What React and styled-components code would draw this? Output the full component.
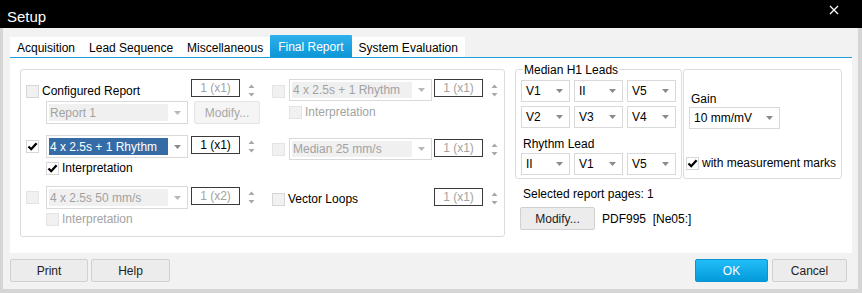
import React from 'react';
import styled, { createGlobalStyle, css } from 'styled-components';

const GlobalStyle = createGlobalStyle`
  html, body {
    margin: 0;
    padding: 0;
  }
  body {
    font-family: "Liberation Sans", Arial, sans-serif;
    font-size: 12px;
    color: #000;
    background: #fff;
  }
`;

const Window = styled.div`
  width: 862px;
  height: 293px;
  display: flex;
  flex-direction: column;
  background: #d5d5d5;
`;

const TitleBar = styled.div`
  height: 28px;
  flex: none;
  background: #000;
  color: #fff;
  display: flex;
  justify-content: space-between;
  align-items: flex-start;
  padding-left: 7px;
`;

const Title = styled.span`
  font-size: 15px;
  line-height: 15px;
  margin-top: 9px;
`;

const CloseIcon = styled.svg`
  margin: 5px 23px 0 0;
`;

const Body = styled.div`
  flex: 1;
  margin: 0 4px 4px 3px;
  padding: 7px 6px 7px 7px;
  background: #f2f2f2;
  display: flex;
  flex-direction: column;
`;

const TabStrip = styled.div`
  display: flex;
  align-items: flex-end;
  height: 22px;
`;

const Tab = styled.div`
  height: 20px;
  box-sizing: border-box;
  padding: 3px 7px 0;
  line-height: 17px;
  background: #fff;
  white-space: nowrap;
  ${(p) =>
    p.$active &&
    css`
      height: 22px;
      line-height: 19px;
      padding: 3px 8px 0;
      color: #fff;
      background: linear-gradient(#2fb1ec, #0d96d6);
      border-radius: 1px 1px 0 0;
    `}
`;

const Panel = styled.div`
  height: 196px;
  box-sizing: border-box;
  border-top: 1px solid #1d9ee0;
  background: #fff;
  padding: 11px 0 0 10px;
  display: flex;
  align-items: flex-start;
`;

const GroupBox = styled.div`
  box-sizing: border-box;
  width: ${(p) => p.$w}px;
  height: ${(p) => p.$h}px;
  border: 1px solid #dcdcdc;
  border-radius: 3px;
  display: flex;
  flex-direction: ${(p) => (p.$row ? 'row' : 'column')};
`;

const ReportGroup = styled(GroupBox)`
  padding: 9px 0 0 5px;
`;

const Column = styled.div`
  width: ${(p) => p.$w}px;
  display: flex;
  flex-direction: column;
`;

const Entry = styled.div`
  display: flex;
  flex-direction: column;
  margin-top: ${(p) => p.$top || 0}px;
`;

const MainRow = styled.div`
  display: grid;
  grid-template-columns: ${(p) => p.$check}px 145px 49px auto;
  align-items: center;
  height: 22px;
`;

const SubRow = styled.div`
  display: flex;
  align-items: center;
  padding-left: ${(p) => p.$indent}px;
  padding-top: ${(p) => p.$top || 0}px;
`;

const CheckLabel = styled.label`
  display: flex;
  align-items: center;
  gap: 3px;
  white-space: nowrap;
  color: ${(p) => (p.$disabled ? '#a3a3a3' : '#000')};
  grid-column: ${(p) => (p.$span ? '1 / 3' : 'auto')};
  margin-top: ${(p) => p.$top || 0}px;
`;

const Box = styled.span`
  width: 13px;
  height: 13px;
  box-sizing: border-box;
  flex: none;
  border: 1px solid ${(p) => (p.$disabled ? '#e4e4e4' : '#d6d6d6')};
  background: ${(p) => (p.$checked ? '#fff' : '#f1f1f1')};
  display: inline-flex;
  align-items: center;
  justify-content: center;
`;

const Check = ({ checked, disabled, label, span, top }) => (
  <CheckLabel $disabled={disabled} $span={span} $top={top}>
    <Box $checked={checked} $disabled={disabled}>
      {checked && (
        <svg width="11" height="11" viewBox="0 0 11 11">
          <path d="M1.5 5.5 L4.2 8.2 L9.6 2.2" fill="none" stroke="#000" strokeWidth="2.3" />
        </svg>
      )}
    </Box>
    {label}
  </CheckLabel>
);

const ComboFrame = styled.div`
  display: flex;
  box-sizing: border-box;
  width: ${(p) => p.$w}px;
  height: ${(p) => p.$h || 22}px;
  border: 1px solid #d9d9d9;
  background: #fff;
`;

const tones = {
  plain: { bg: 'transparent', fg: '#000' },
  disabled: { bg: '#f0f0f0', fg: '#a2a2a2' },
  selected: { bg: '#356ca5', fg: '#fff' },
};

const ComboValue = styled.div`
  flex: 1;
  margin: 2px 0 2px 2px;
  padding-left: ${(p) => (p.$tone === 'plain' ? 2 : 1)}px;
  display: flex;
  align-items: center;
  white-space: nowrap;
  overflow: hidden;
  background: ${(p) => tones[p.$tone].bg};
  color: ${(p) => tones[p.$tone].fg};
`;

const ComboArrow = styled.div`
  width: 19px;
  flex: none;
  display: flex;
  align-items: center;
  justify-content: center;
`;

const Combo = ({ w, h, value, tone = 'plain', disabled }) => (
  <ComboFrame $w={w} $h={h}>
    <ComboValue $tone={tone}>{value}</ComboValue>
    <ComboArrow>
      <svg width="7" height="4" viewBox="0 0 7 4">
        <path d="M0 0 H7 L3.5 4 Z" fill={disabled ? '#b8b8b8' : '#8a8a8a'} />
      </svg>
    </ComboArrow>
  </ComboFrame>
);

const SpinBox = styled.div`
  width: 49px;
  height: 18px;
  box-sizing: border-box;
  border: 1px solid #3a3a3a;
  display: flex;
  align-items: center;
  justify-content: center;
  align-self: start;
  margin-top: ${(p) => p.$top || 0}px;
  color: ${(p) => (p.$disabled ? '#a3a3a3' : '#000')};
  white-space: nowrap;
`;

const SpinArrows = styled.svg`
  margin-left: 8px;
`;

const Spin = ({ value, disabled, top }) => (
  <>
    <SpinBox $disabled={disabled} $top={top}>
      {value}
    </SpinBox>
    <SpinArrows width="7" height="13" viewBox="0 0 7 13">
      <path d="M3.5 0.5 L6.5 4 H0.5 Z" fill="#a8a8a8" />
      <path d="M0.5 9 H6.5 L3.5 12.5 Z" fill="#a8a8a8" />
    </SpinArrows>
  </>
);

const Button = styled.button`
  box-sizing: border-box;
  width: ${(p) => p.$w}px;
  height: 23px;
  margin-left: ${(p) => p.$gap || 0}px;
  padding: 0;
  font: 12px "Liberation Sans", Arial, sans-serif;
  color: #222;
  background: #ececec;
  border: 1px solid #d0d0d0;
  border-radius: 2px;
  ${(p) =>
    p.$disabled &&
    css`
      color: #a8a8a8;
      background: #f5f5f5;
      border-color: #e4e4e4;
    `}
  ${(p) =>
    p.$primary &&
    css`
      color: #fff;
      background: linear-gradient(#22bdf9, #039ad9);
      border-color: #0c93d2;
    `}
`;

const RightSide = styled.div`
  margin-left: 10px;
  display: flex;
  flex-direction: column;
`;

const GroupRow = styled.div`
  display: flex;
  gap: 1px;
`;

const LeadsGroup = styled(GroupBox)`
  padding: 0 5px;
`;

const Caption = styled.span`
  align-self: flex-start;
  line-height: 14px;
  margin: -7px 0 0 2px;
  padding: 0 1px;
  background: #fff;
`;

const LeadGrid = styled.div`
  display: grid;
  grid-template-columns: repeat(3, 49px);
  grid-auto-rows: 22px;
  gap: 4px;
  margin-top: ${(p) => p.$top}px;
`;

const Label = styled.div`
  line-height: 14px;
  margin: ${(p) => p.$m};
  white-space: nowrap;
`;

const GainGroup = styled(GroupBox)`
  padding: 0 0 0 2px;
`;

const Indented = styled.div`
  margin: ${(p) => p.$m};
`;

const PrinterRow = styled.div`
  display: flex;
  align-items: center;
  margin: 6px 0 0 5px;
`;

const Footer = styled.div`
  margin-top: 6px;
  display: flex;
  justify-content: space-between;
  padding-right: 5px;
`;

const ButtonGroup = styled.div`
  display: flex;
`;

const tabs = ['Acquisition', 'Lead Sequence', 'Miscellaneous', 'Final Report', 'System Evaluation'];

export default function App() {
  return (
    <>
      <GlobalStyle />
      <Window>
        <TitleBar>
          <Title>Setup</Title>
          <CloseIcon width="10" height="10" viewBox="0 0 10 10">
            <path d="M1 1 L9 9 M9 1 L1 9" stroke="#fff" strokeWidth="1.3" />
          </CloseIcon>
        </TitleBar>
        <Body>
          <TabStrip>
            {tabs.map((t) => (
              <Tab key={t} $active={t === 'Final Report'}>
                {t}
              </Tab>
            ))}
          </TabStrip>
          <Panel>
            <ReportGroup $w={485} $h={168} $row>
              <Column $w={246}>
                <Entry>
                  <MainRow $check={20}>
                    <Check label="Configured Report" span top={2} />
                    <Spin value="1 (x1)" disabled />
                  </MainRow>
                  <SubRow $indent={20}>
                    <Combo w={142} h={23} value="Report 1" tone="disabled" disabled />
                    <Button $w={66} $gap={6} $disabled>
                      Modify...
                    </Button>
                  </SubRow>
                </Entry>
                <Entry $top={11}>
                  <MainRow $check={20}>
                    <Check checked />
                    <Combo w={142} h={23} value="4 x 2.5s + 1 Rhythm" tone="selected" />
                    <Spin value="1 (x1)" top={1} />
                  </MainRow>
                  <SubRow $indent={20} $top={4}>
                    <Check checked label="Interpretation" />
                  </SubRow>
                </Entry>
                <Entry $top={11}>
                  <MainRow $check={20}>
                    <Check disabled />
                    <Combo w={142} h={23} value="4 x 2.5s 50 mm/s" tone="disabled" disabled />
                    <Spin value="1 (x2)" disabled top={1} />
                  </MainRow>
                  <SubRow $indent={20} $top={4}>
                    <Check disabled label="Interpretation" />
                  </SubRow>
                </Entry>
              </Column>
              <Column $w={230}>
                <Entry>
                  <MainRow $check={17}>
                    <Check disabled top={2} />
                    <Combo w={143} value="4 x 2.5s + 1 Rhythm" tone="disabled" disabled />
                    <Spin value="1 (x1)" disabled />
                  </MainRow>
                  <SubRow $indent={17} $top={4}>
                    <Check disabled label="Interpretation" />
                  </SubRow>
                </Entry>
                <Entry $top={19}>
                  <MainRow $check={17}>
                    <Check disabled />
                    <Combo w={143} value="Median 25 mm/s" tone="disabled" disabled />
                    <Spin value="1 (x1)" disabled top={1} />
                  </MainRow>
                </Entry>
                <Entry $top={27}>
                  <MainRow $check={17}>
                    <Check label="Vector Loops" span top={2} />
                    <Spin value="1 (x1)" disabled top={1} />
                  </MainRow>
                </Entry>
              </Column>
            </ReportGroup>
            <RightSide>
              <GroupRow>
                <LeadsGroup $w={167} $h={110}>
                  <Caption>Median H1 Leads</Caption>
                  <LeadGrid $top={3}>
                    {['V1', 'II', 'V5', 'V2', 'V3', 'V4'].map((l) => (
                      <Combo key={l} w={49} value={l} />
                    ))}
                  </LeadGrid>
                  <Label $m="9px 0 0 2px">Rhythm Lead</Label>
                  <LeadGrid $top={2}>
                    {['II', 'V1', 'V5'].map((l) => (
                      <Combo key={l} w={49} value={l} />
                    ))}
                  </LeadGrid>
                </LeadsGroup>
                <GainGroup $w={159} $h={110}>
                  <Label $m="22px 0 0 5px">Gain</Label>
                  <Indented $m="1px 0 0 3px">
                    <Combo w={91} value="10 mm/mV" />
                  </Indented>
                  <Indented $m="27px 0 0 0">
                    <Check checked label="with measurement marks" />
                  </Indented>
                </GainGroup>
              </GroupRow>
              <Label $m="8px 0 0 8px">Selected report pages: 1</Label>
              <PrinterRow>
                <Button $w={75}>Modify...</Button>
                <Label $m="0 0 0 7px">PDF995&nbsp; [Ne05:]</Label>
              </PrinterRow>
            </RightSide>
          </Panel>
          <Footer>
            <ButtonGroup>
              <Button $w={78}>Print</Button>
              <Button $w={79} $gap={3}>
                Help
              </Button>
            </ButtonGroup>
            <ButtonGroup>
              <Button $w={73} $primary>
                OK
              </Button>
              <Button $w={75} $gap={4}>
                Cancel
              </Button>
            </ButtonGroup>
          </Footer>
        </Body>
      </Window>
    </>
  );
}
